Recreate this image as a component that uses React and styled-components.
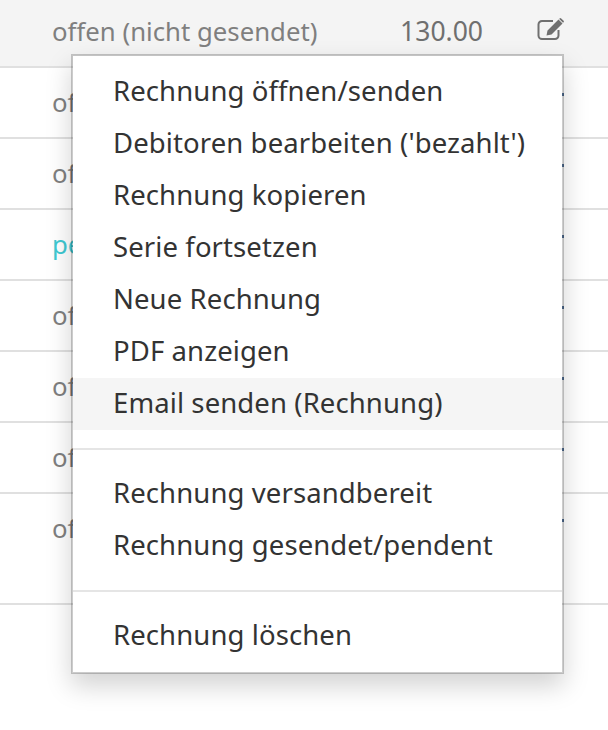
import React from "react";
import styled, { createGlobalStyle } from "styled-components";

const GlobalStyle = createGlobalStyle`
  html, body {
    margin: 0;
    padding: 0;
    background: #fff;
  }
  body {
    font-family: "Noto Sans", Lato, sans-serif;
    overflow: hidden;
  }
`;

const rows = [
  { status: "offen (nicht gesendet)", amount: "130.00", active: true },
  { status: "offen" },
  { status: "offen" },
  { status: "pendent", teal: true },
  { status: "offen" },
  { status: "offen" },
  { status: "offen" },
  { status: "offen", tall: true },
];

const menuGroups = [
  [
    "Rechnung öffnen/senden",
    "Debitoren bearbeiten ('bezahlt')",
    "Rechnung kopieren",
    "Serie fortsetzen",
    "Neue Rechnung",
    "PDF anzeigen",
    "Email senden (Rechnung)",
  ],
  ["Rechnung versandbereit", "Rechnung gesendet/pendent"],
  ["Rechnung löschen"],
];

// pencil-in-a-box, open at the top right
const EditIcon = () => (
  <svg width="27" height="22" viewBox="0 0 27 22" fill="none">
    <path
      d="M16 3H5a3.5 3.5 0 0 0-3.5 3.5v11A3.5 3.5 0 0 0 5 21h13a3.5 3.5 0 0 0 3.5-3.5V12"
      stroke="currentColor"
      strokeWidth="2"
    />
    <path
      d="M21.5 1.5l4 4L14.5 16.5 9.5 17.5l1-5zM22.8.4a1 1 0 0 1 1.4 0l2.4 2.4a1 1 0 0 1 0 1.4l-.6.6-4-4z"
      fill="currentColor"
    />
  </svg>
);

const App = () => (
  <Page>
    <GlobalStyle />
    <List>
      {rows.map((row, i) => (
        <Row key={i} $active={row.active} $tall={row.tall}>
          <Status $teal={row.teal}>{row.status}</Status>
          {row.amount && <Amount>{row.amount}</Amount>}
          <Action>{row.active ? <EditIcon /> : <Dot />}</Action>
        </Row>
      ))}
    </List>
    <Menu>
      {menuGroups.map((group, g) => (
        <React.Fragment key={g}>
          {g > 0 && <Divider />}
          {group.map((label) => (
            <MenuItem key={label} $hover={label.startsWith("Email")}>
              {label}
            </MenuItem>
          ))}
        </React.Fragment>
      ))}
    </Menu>
  </Page>
);

export default App;

const Page = styled.div`
  position: relative;
  width: 608px;
  height: 730px;
  overflow: hidden;
`;

const List = styled.div`
  display: flex;
  flex-direction: column;
`;

const Row = styled.div`
  display: flex;
  align-items: flex-start;
  box-sizing: border-box;
  height: ${(p) => (p.$active ? "68px" : p.$tall ? "111px" : "71px")};
  padding: ${(p) => (p.$active ? "13px" : "16px")} 44px 0 52px;
  background: ${(p) => (p.$active ? "#f4f4f4" : "#fff")};
  border-bottom: 2px solid #e0e0e0;
`;

const Status = styled.div`
  flex: 1;
  font-size: 25.75px;
  line-height: 36px;
  color: ${(p) => (p.$teal ? "#3fc9d2" : "#7f7f7f")};
`;

const Amount = styled.div`
  font-size: 26.5px;
  line-height: 36px;
  color: #6f6f6f;
  margin-right: 54px;
`;

const Action = styled.div`
  display: flex;
  justify-content: flex-end;
  width: 27px;
  height: 27px;
  margin-top: 5px;
  color: #707070;
`;

const Dot = styled.span`
  width: 2px;
  height: 3px;
  margin-top: 4px;
  background: #55749c;
`;

const Menu = styled.div`
  position: absolute;
  top: 54px;
  left: 71px;
  width: 493px;
  box-sizing: border-box;
  padding: 10px 0;
  background: #fff;
  background-clip: padding-box;
  border: 2px solid rgba(0, 0, 0, 0.2);
  box-shadow: 0 12px 24px rgba(0, 0, 0, 0.175);
`;

const MenuItem = styled.div`
  padding: 5px 40px 7px;
  font-size: 27.5px;
  letter-spacing: 0.1px;
  line-height: 40px;
  color: #333;
  white-space: nowrap;
  background: ${(p) => (p.$hover ? "#f5f5f5" : "transparent")};
`;

const Divider = styled.div`
  height: 2px;
  margin: 18px 0;
  background: #e5e5e5;
`;
